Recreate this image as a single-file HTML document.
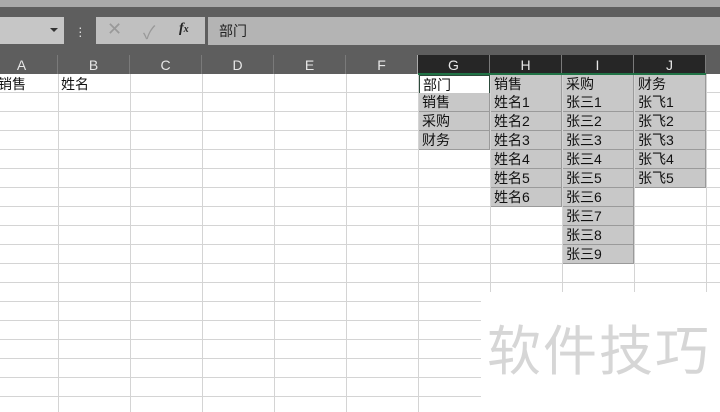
<!DOCTYPE html><html><head><meta charset="utf-8"><style>
body{margin:0;width:720px;height:412px;overflow:hidden;position:relative;background:#fff;font-family:"Liberation Sans","Noto Sans CJK SC",sans-serif}
div{position:absolute;box-sizing:border-box}
.t{font-size:14px;color:#111;line-height:20px;padding-left:3px}
.h{top:55px;height:19px;width:72px;text-align:center;font-size:14px;line-height:20px;color:#e6e6e6;border-right:1px solid #7a7a7a}
.c{width:72px;height:19px;background:#c8c8c8;border-right:1px solid #9a9a9a;border-bottom:1px solid #9a9a9a;font-size:14px;line-height:19px;padding-left:3px;color:#111}
</style></head><body>
<div style="left:0;top:0;width:720px;height:74px;background:#5e5e5e"></div>
<div style="left:0;top:0;width:720px;height:7px;background:#a9a9a9"></div>
<div style="left:0;top:17px;width:64px;height:27px;background:#c6c6c6"></div>
<div style="left:50px;top:28px;width:0;height:0;border-left:4px solid transparent;border-right:4px solid transparent;border-top:4px solid #333"></div>
<div style="left:78px;top:25px;color:#ddd;font-size:14px;line-height:4px">·<br>·<br>·</div>
<div style="left:96px;top:17px;width:109px;height:27px;background:#c0c0c0"></div>
<div style="left:107px;top:19px;color:#999;font-size:18px">✕</div>
<div style="left:143px;top:19px;color:#999;font-size:18px">✓</div>
<div style="left:179px;top:21px;color:#222;font-size:14px;font-style:italic;font-family:'Liberation Serif',serif;font-weight:bold">f<span style="font-size:10px">x</span></div>
<div style="left:208px;top:17px;width:512px;height:28px;background:#b4b4b4"></div>
<div style="left:219px;top:21px;font-size:14px;color:#222">部门</div>
<div style="left:0;top:74px;width:720px;height:338px;background-image:repeating-linear-gradient(to bottom,transparent 0,transparent 18px,#d4d4d4 18px,#d4d4d4 19px),repeating-linear-gradient(to right,transparent 0,transparent 58px,#d4d4d4 58px,#d4d4d4 59px,transparent 59px,transparent 72px);background-size:720px 338px,720px 338px"></div>
<div class="h" style="left:-14px">A</div><div class="h" style="left:58px">B</div><div class="h" style="left:130px">C</div><div class="h" style="left:202px">D</div><div class="h" style="left:274px">E</div><div class="h" style="left:346px;border-right-color:#aaa">F</div>
<div class="h" style="left:418px;background:#262626">G</div><div class="h" style="left:490px;background:#262626">H</div><div class="h" style="left:562px;background:#262626">I</div><div class="h" style="left:634px;background:#262626">J</div>
<div style="left:418px;top:73px;width:288px;height:2px;background:#217346"></div>
<div class="t" style="left:-5px;top:74px">销售</div><div class="t" style="left:58px;top:74px">姓名</div>
<div class="c" style="left:419px;top:75px;width:71px;background:#fff;border:1.5px solid #2c4a3a">部门</div>
<div class="c" style="left:419px;top:93px;width:71px">销售</div><div class="c" style="left:419px;top:112px;width:71px">采购</div><div class="c" style="left:419px;top:131px;width:71px">财务</div>
<div class="c" style="left:491px;top:75px;width:71px">销售</div>
<div class="c" style="left:491px;top:93px;width:71px">姓名1</div><div class="c" style="left:491px;top:112px;width:71px">姓名2</div><div class="c" style="left:491px;top:131px;width:71px">姓名3</div><div class="c" style="left:491px;top:150px;width:71px">姓名4</div><div class="c" style="left:491px;top:169px;width:71px">姓名5</div><div class="c" style="left:491px;top:188px;width:71px">姓名6</div>
<div class="c" style="left:563px;top:75px;width:71px">采购</div>
<div class="c" style="left:563px;top:93px;width:71px">张三1</div><div class="c" style="left:563px;top:112px;width:71px">张三2</div><div class="c" style="left:563px;top:131px;width:71px">张三3</div><div class="c" style="left:563px;top:150px;width:71px">张三4</div><div class="c" style="left:563px;top:169px;width:71px">张三5</div><div class="c" style="left:563px;top:188px;width:71px">张三6</div><div class="c" style="left:563px;top:207px;width:71px">张三7</div><div class="c" style="left:563px;top:226px;width:71px">张三8</div><div class="c" style="left:563px;top:245px;width:71px">张三9</div>
<div class="c" style="left:635px;top:75px;width:71px">财务</div>
<div class="c" style="left:635px;top:93px;width:71px">张飞1</div><div class="c" style="left:635px;top:112px;width:71px">张飞2</div><div class="c" style="left:635px;top:131px;width:71px">张飞3</div><div class="c" style="left:635px;top:150px;width:71px">张飞4</div><div class="c" style="left:635px;top:169px;width:71px">张飞5</div>
<div style="left:481px;top:292px;width:239px;height:120px;background:#fff"></div>
<div style="left:487px;top:316px;font-size:54px;line-height:62px;color:#d6d6d6;font-family:'Noto Sans CJK SC',sans-serif;letter-spacing:2px">软件技巧</div>
</body></html>
